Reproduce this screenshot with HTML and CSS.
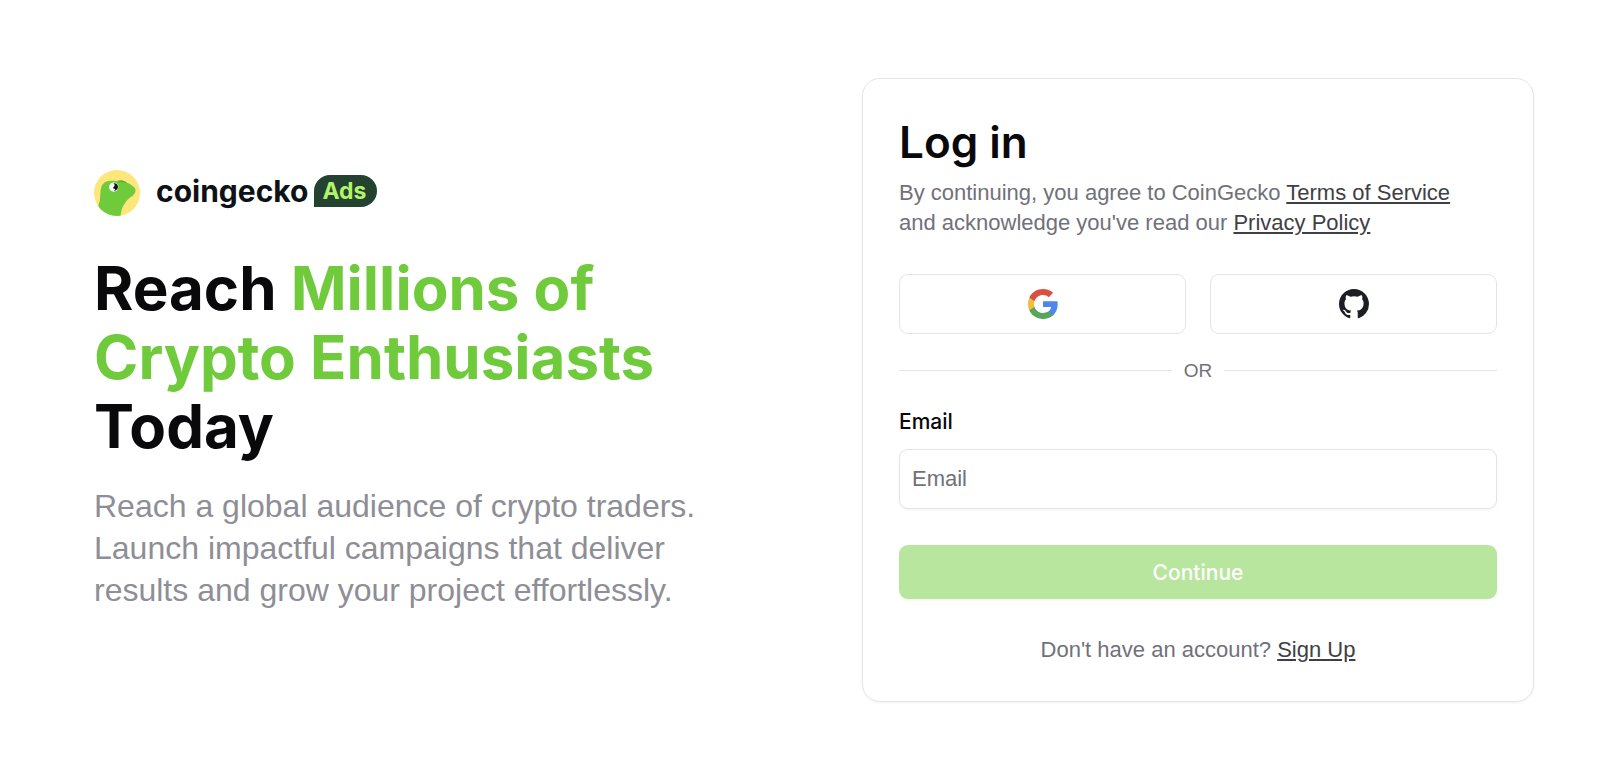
FILE: index.html
```html
<!DOCTYPE html>
<html lang="en">

<head>
    <meta charset="UTF-8">
    <meta name="viewport" content="width=device-width, initial-scale=1">
    <title>Log in - CoinGecko Ads</title>
    <link rel="stylesheet" href="styles.css">
</head>

<body>
    <main class="page">
        <section class="intro">
            <div class="logo">
                <svg class="logo-icon" viewBox="0 0 140 140" aria-hidden="true">
                    <clipPath id="coin"><circle cx="70" cy="70" r="70" /></clipPath>
                    <circle cx="70" cy="70" r="70" fill="#fde67a" />
                    <g clip-path="url(#coin)">
                        <path fill="#70cb3c" d="M8 140L14 106C20 92 18 79 20 64C22 44 32 33 50 33C60 32 69 33 77 34C87 31 94 33 101 39C111 43 120 49 125 56C129 65 124 72 117 79C107 85 99 92 94 101C86 112 82 125 81 140Z" />
                        <path fill="#5ab22c" d="M70 34C80 29 93 32 100 40C91 37 82 38 70 34Z" />
                    </g>
                    <circle cx="60" cy="52" r="14" fill="#fff" />
                    <path fill="#0d1217" d="M59 41c7-2 14 4 14 11s-7 13-14 11c4-1 6-3 5-6c-5 2-8-4-3-7c3-3 2-7-2-9z" />
                </svg>
                <span class="logo-name">coingecko</span>
                <span class="logo-badge">Ads</span>
            </div>
            <h1>Reach <span>Millions of Crypto Enthusiasts</span> Today</h1>
            <p>Reach a global audience of crypto traders. Launch impactful campaigns that deliver results and grow your project effortlessly.</p>
        </section>

        <section class="card">
            <h2>Log in</h2>
            <p class="terms">By continuing, you agree to CoinGecko <a href="#">Terms of Service</a> and acknowledge you've read our <a href="#">Privacy Policy</a></p>

            <div class="providers">
                <button type="button" aria-label="Google">
                    <svg viewBox="0 0 48 48">
                        <path fill="#4f86ec" d="M47.5 24.5c0-1.7-.2-3.3-.4-4.9H24v9.3h13.2c-.6 3-2.3 5.6-4.9 7.3v6h7.9c4.6-4.3 7.3-10.5 7.3-17.7z" />
                        <path fill="#58a55c" d="M24 48c6.6 0 12.1-2.2 16.2-5.9l-7.9-6c-2.2 1.5-5 2.3-8.3 2.3-6.4 0-11.8-4.3-13.7-10.1H2.1v6.2C6.2 42.6 14.4 48 24 48z" />
                        <path fill="#f1be42" d="M10.3 28.3c-.5-1.4-.7-2.8-.7-4.3s.3-3 .7-4.3v-6.2H2.1C.8 16.7 0 20.2 0 24s.8 7.3 2.1 10.5z" />
                        <path fill="#d95040" d="M24 9.5c3.6 0 6.8 1.2 9.3 3.6l7-7C36.1 2.3 30.6 0 24 0 14.4 0 6.2 5.4 2.1 13.5l8.2 6.2C12.2 13.8 17.6 9.5 24 9.5z" />
                    </svg>
                </button>
                <button type="button" aria-label="GitHub">
                    <svg viewBox="0 0 16 16">
                        <path fill="#1b1f24" fill-rule="evenodd" d="M8 0C3.58 0 0 3.58 0 8c0 3.54 2.29 6.53 5.47 7.59.4.07.55-.17.55-.38 0-.19-.01-.82-.01-1.49-2.01.37-2.53-.49-2.69-.94-.09-.23-.48-.94-.82-1.13-.28-.15-.68-.52-.01-.53.63-.01 1.08.58 1.23.82.72 1.21 1.87.87 2.33.66.07-.52.28-.87.51-1.07-1.78-.2-3.64-.89-3.64-3.95 0-.87.31-1.59.82-2.15-.08-.2-.36-1.02.08-2.12 0 0 .67-.21 2.2.82.64-.18 1.32-.27 2-.27s1.36.09 2 .27c1.53-1.04 2.2-.82 2.2-.82.44 1.1.16 1.92.08 2.12.51.56.82 1.27.82 2.15 0 3.07-1.87 3.75-3.65 3.95.29.25.54.73.54 1.48 0 1.07-.01 1.93-.01 2.2 0 .21.15.46.55.38A8.01 8.01 0 0 0 16 8c0-4.42-3.58-8-8-8z" />
                    </svg>
                </button>
            </div>

            <div class="divider">OR</div>

            <form>
                <label for="email">Email</label>
                <input type="email" id="email" placeholder="Email">
                <button type="submit" class="submit" disabled>Continue</button>
            </form>

            <p class="signup">Don't have an account? <a href="#">Sign Up</a></p>
        </section>
    </main>
</body>

</html>
```

FILE: styles.css
```css
* {
    box-sizing: border-box;
}

body {
    margin: 0;
    background-color: #fff;
    color: #09090b;
    font-family: "Liberation Sans", Arial, sans-serif;
}

h1,
h2,
p {
    margin: 0;
}

.page {
    display: grid;
    grid-template-columns: 1fr 1fr;
    gap: 126px;
    align-items: center;
    padding: 78px 64px 56px;
}

.intro {
    padding-left: 30px;
}

.logo {
    display: flex;
    align-items: center;
    font-family: Inter, sans-serif;
    font-weight: 700;
}

.logo-icon {
    width: 46px;
    height: 46px;
    margin-right: 16px;
}

.logo-name,
.logo-badge {
    margin-bottom: 3px;
}

.logo-name {
    color: #0d1217;
    font-size: 30px;
    line-height: 32px;
    margin-right: 6px;
}

.logo-badge {
    padding: 0 10px 0 8px;
    border-radius: 16px 16px 16px 0;
    background-color: #244230;
    color: #b2f36b;
    font-size: 23px;
    line-height: 32px;
}

.intro h1 {
    margin-top: 38px;
    font-family: Inter, sans-serif;
    font-size: 60px;
    font-weight: 700;
    line-height: 69px;
}

.intro h1 span {
    color: #70cb3c;
}

.intro p {
    margin-top: 24px;
    color: #8e8e96;
    font-size: 32px;
    line-height: 42px;
}

.card {
    padding: 36px;
    border: 1px solid #e4e4e7;
    border-radius: 18px;
    box-shadow: 0 1px 3px rgba(0, 0, 0, 0.05);
    color: #71717a;
    font-size: 22px;
    line-height: 30px;
}

.card h2 {
    color: #09090b;
    font-family: Inter, sans-serif;
    font-size: 44px;
    font-weight: 600;
    line-height: 54px;
}

.card a {
    color: #3f3f46;
    text-underline-offset: 2px;
}

.terms {
    margin-top: 9px;
    padding-right: 30px;
}

.providers {
    display: grid;
    grid-template-columns: 1fr 1fr;
    gap: 24px;
    margin-top: 36px;
}

.providers button {
    display: flex;
    justify-content: center;
    align-items: center;
    height: 60px;
    border: 1px solid #e4e4e7;
    border-radius: 9px;
    background-color: #fff;
    cursor: pointer;
}

.providers svg {
    width: 30px;
    height: 30px;
}

.divider {
    display: flex;
    align-items: center;
    gap: 12px;
    margin-top: 24px;
    font-size: 19px;
    line-height: 25px;
}

.divider::before,
.divider::after {
    content: "";
    flex: 1;
    border-top: 1px solid #e4e4e7;
}

form {
    display: flex;
    flex-direction: column;
    margin-top: 24px;
}

label {
    color: #09090b;
    font-family: Inter, sans-serif;
    font-size: 21px;
    font-weight: 500;
}

input {
    height: 60px;
    margin-top: 12px;
    padding: 0 12px;
    border: 1px solid #e4e4e7;
    border-radius: 9px;
    box-shadow: 0 1px 3px rgba(0, 0, 0, 0.05);
    font-family: inherit;
    font-size: 22px;
}

input::placeholder {
    color: #71717a;
}

.submit {
    height: 54px;
    margin-top: 36px;
    border: none;
    border-radius: 9px;
    background-color: #b8e69e;
    box-shadow: 0 1px 3px rgba(0, 0, 0, 0.05);
    color: #fff;
    font-family: Inter, sans-serif;
    font-size: 21px;
    font-weight: 500;
}

.signup {
    margin-top: 36px;
    text-align: center;
}
```
